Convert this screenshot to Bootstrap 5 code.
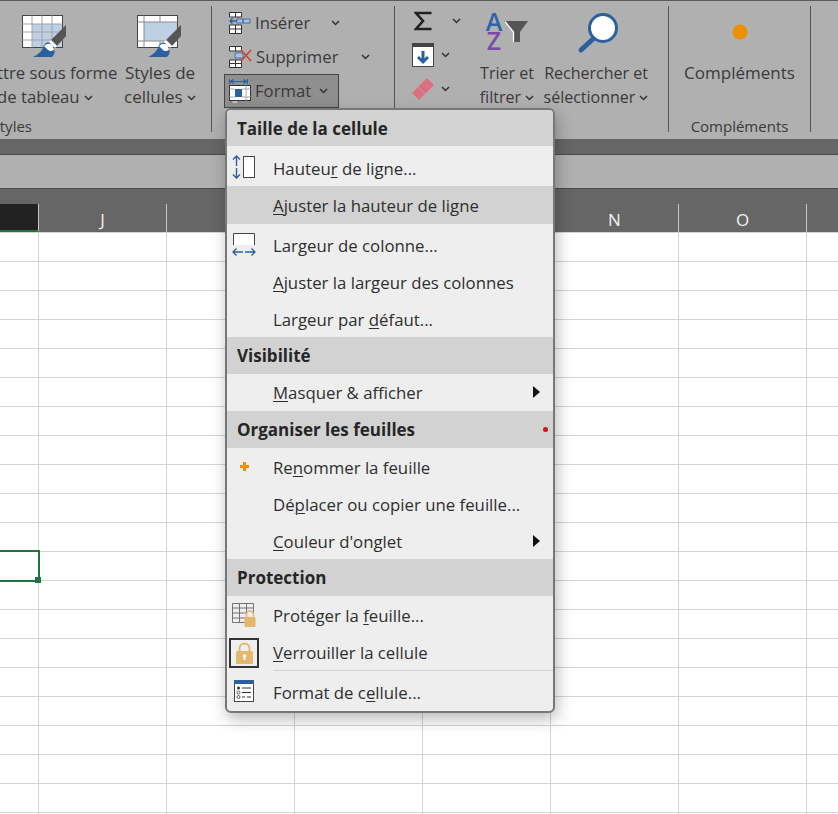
<!DOCTYPE html>
<html lang="fr">
<head>
<meta charset="UTF-8">
<title>Format</title>
<link href="https://cdn.jsdelivr.net/npm/bootstrap@5.3.3/dist/css/bootstrap.min.css" rel="stylesheet">
<style>
body { margin: 0; width: 838px; height: 814px; overflow: hidden; background: #fff; font-family: "Open Sans", "Liberation Sans", sans-serif; color: #333; }
svg { display: block; flex: none; }

/* ribbon */
.xl-page { width: 838px; overflow: hidden; }
.xl-ribbon { height: 139px; background: #b0b0b0; border-top: 1px solid #5a5a5a; margin-left: -34px; width: 872px; font-size: 17px; color: #3a3a3a; }
.xl-group { height: 126px; margin-top: 5px; border-right: 1px solid #555; flex: none; position: relative; }
.xl-g-styles { width: 246px; }
.xl-g-cells { width: 183px; padding-left: 17px; font-size: 16.7px; }
.xl-g-edit { width: 274px; font-size: 16px; }
.xl-g-addin { width: 142px; }
.xl-big { width: 100%; text-align: center; line-height: 24px; white-space: nowrap; }
.xl-big svg { margin: 0 auto; }
.xl-b-table { width: 158px; font-size: 16.7px; }
.xl-b-cellstyle { width: 72px; }
.xl-b-sort { width: 68px; margin-left: -2px; }
.xl-b-find { width: 116px; margin-left: -3px; }
.xl-icon-box { height: 55px; display: flex; align-items: center; justify-content: center; }
.xl-brush { margin-top: 6px !important; }
.xl-sort-icon { justify-content: flex-start; padding-left: 12px; gap: 1px; }
.xl-az { display: flex; flex-direction: column; font-size: 25px; font-weight: 600; line-height: 19px; margin-top: -5px; width: 18px; text-align: center; }
.xl-az-a { color: #2b64a8; }
.xl-az-z { color: #7a4ba5; }
.xl-funnel { margin: -4px 0 0 !important; }
.xl-lens { margin-left: 39px !important; margin-top: -1px !important; }
.xl-addin-dot { margin-top: -4px !important; }
.xl-label { position: absolute; bottom: -4px; left: 0; right: 0; text-align: center; font-size: 15px; line-height: 20px; }
.xl-label-styles { right: 179px; text-align: right; }
.xl-small { height: 34px; white-space: nowrap; }
.xl-active { background: #8f8f8f; border: 1px solid #444; width: 115px; margin-left: -5px; padding-left: 4px; }
.xl-chev { display: inline-block; vertical-align: 2px; margin-left: 4px; }
.xl-chev-near { margin-left: 1px; }
.xl-m-ins { margin-left: 17px; }
.xl-m-sup { margin-left: 19px; }
.xl-m-fmt { margin-left: 4px; }
.xl-tools { width: 80px; margin-top: -2px; padding-left: 17px; }
.xl-sigma { margin-left: 2px; }
.xl-m-sigma { margin-left: 20px; }
.xl-m-tool { margin-left: 7px; }
.xl-band { height: 16px; background: #666; border-bottom: 1px solid #4a4a4a; }
.xl-formula { height: 34px; background: #b0b0b0; border-bottom: 1px solid #4a4a4a; }

/* grid */
.xl-head { height: 43px; background: #666; padding-top: 15px; }
.xl-corner { width: 39px; flex: none; background: #222; border-right: 1px solid #c8c8c8; border-bottom: 2px solid #217346; }
.xl-col { width: 128px; flex: none; border-right: 1px solid #c8c8c8; color: #f2f2f2; text-align: center; font-size: 17px; line-height: 31px; }
.xl-sheet { height: 582px; position: relative; background-color: #fff;
  background-image: linear-gradient(#d4d4d4 1px, transparent 1px), linear-gradient(90deg, #d4d4d4 1px, transparent 1px);
  background-size: 128px 29px; background-position: 0 0, 38px 0; }
.xl-selected { position: absolute; left: -3px; top: 318px; width: 43px; height: 32px; border: 2px solid #217346; }
.xl-handle { position: absolute; left: 35px; top: 345px; width: 6px; height: 6px; background: #217346; }

/* menu */
.xl-menu { position: absolute; left: 225px; top: 108px; width: 330px; height: 605px; padding: 0; margin: 0; background: #eee; border: 2px solid #777; border-radius: 6px; box-shadow: 2px 6px 16px rgba(0,0,0,.28); font-size: 16.8px; overflow: hidden; }
.xl-menu .dropdown-header { height: 37px; background: #d2d2d2; color: #262626; font-weight: 700; font-size: 17px; padding: 0 0 0 10px; line-height: 38px; }
.xl-menu .dropdown-header.xl-first { height: 36px; }
.xl-menu .dropdown-item { color: #2e2e2e; padding: 0; height: 37px; position: relative; white-space: nowrap; }
.xl-menu .dropdown-item.active { background: #d2d2d2; color: #2e2e2e; }
.xl-slot { width: 34px; margin-right: 12px; flex: none; display: flex; justify-content: center; }
.xl-menu .dropdown-item.xl-h40 { height: 40px; padding-top: 4px; }
.xl-menu .dropdown-item.xl-h38 { height: 38px; padding-top: 1px; }
.xl-menu .dropdown-item.xl-h36 { height: 36px; padding-top: 1px; }
.xl-menu .dropdown-item.xl-low { padding-top: 6px; }
.xl-lift { margin-top: -2px; }
.xl-lift4 { margin-top: -4px; }
.xl-arrow { position: absolute; left: 306px; width: 0; height: 0; border-left: 7px solid #111; border-top: 6px solid transparent; border-bottom: 6px solid transparent; margin-top: -2px; }
.xl-dot { position: absolute; left: 316px; top: 16px; width: 5px; height: 5px; border-radius: 50%; background: #e01010; }
.xl-menu .dropdown-divider { margin: 0 0 0 46px; border-top: 1px solid #d0d0d0; opacity: 1; }
.xl-lockbox { width: 30px; height: 30px; border: 2px solid #333; display: flex; align-items: center; justify-content: center; flex: none; }
.xl-menu u { text-underline-offset: 2px; text-decoration-thickness: 1px; }
</style>
</head>
<body>

<svg width="0" height="0" class="position-absolute">
  <symbol id="chev" viewBox="0 0 9 6"><path d="M1 1l3.500 3.500L8 1" fill="none" stroke="#333" stroke-width="1.500"/></symbol>
  <symbol id="brush" viewBox="0 0 46 44">
    <path d="M44 10v11l-9 10-6-6z" fill="#555"/>
    <path d="M29 25l6 6-2 2-6-6z" fill="#fff"/>
    <path d="M11 42q9-4 11-12 3-4 6-2l4 6q2 4-2 8z" fill="#2b5f9e"/>
    <path d="M22 31q4-4 8-1l2 5q-4 2-6 0z" fill="#fff"/>
  </symbol>
</svg>

<div class="xl-page">
<div class="xl-ribbon d-flex">
  <!-- Styles -->
  <div class="xl-group xl-g-styles d-flex">
    <div class="xl-big xl-b-table">
      <div class="xl-icon-box">
        <svg class="xl-brush" width="46" height="44" viewBox="0 0 46 44">
          <rect x=".5" y=".5" width="40" height="32" fill="#fff" stroke="#444"/>
          <rect x="10" y="9" width="30" height="23" fill="#bdd0e6"/>
          <path d="M.5 9h40M.5 17h40M.5 25h40M10 .5v32M20 .5v32M30 .5v32" stroke="#a4a4a4" fill="none"/>
          <use href="#brush"/>
        </svg>
      </div>
      <div>Mettre sous forme</div>
      <div>de tableau <svg class="xl-chev d-inline-block" width="9" height="6"><use href="#chev"/></svg></div>
    </div>
    <div class="xl-big xl-b-cellstyle">
      <div class="xl-icon-box">
        <svg class="xl-brush" width="46" height="44" viewBox="0 0 46 44">
          <rect x=".5" y=".5" width="40" height="32" fill="#fff" stroke="#444"/>
          <rect x="7" y="7" width="33" height="19" fill="#bdd0e6"/>
          <path d="M.5 7h40M.5 26h40M7 .5v32M23 .5v6M23 26v6" stroke="#8a8a8a" fill="none"/>
          <use href="#brush"/>
        </svg>
      </div>
      <div>Styles de</div>
      <div>cellules <svg class="xl-chev d-inline-block" width="9" height="6"><use href="#chev"/></svg></div>
    </div>
    <div class="xl-label xl-label-styles">Styles</div>
  </div>

  <!-- Cellules -->
  <div class="xl-group xl-g-cells d-flex flex-column">
    <div class="xl-small d-flex align-items-center gap-1">
      <svg width="22" height="22" viewBox="0 0 22 22"><path d="M.5.500h12V5H.5zM6.500.5V5M.5 13h12v8.500H.5zM.5 17h12M6.500 13v8.500" fill="#fff" stroke="#333"/><path d="M8 7h6v4H8zM14 7h7v4h-7z" fill="#a9c2de" stroke="#2b5f9e" stroke-width=".8"/><path d="M8 9H1M3.500 6.500L1 9l2.500 2.500" fill="none" stroke="#2b5f9e" stroke-width="1.400"/></svg>
      <span>Insérer</span><svg class="xl-m-ins" width="9" height="6"><use href="#chev"/></svg>
    </div>
    <div class="xl-small d-flex align-items-center gap-1">
      <svg width="23" height="22" viewBox="0 0 23 22"><path d="M.5.500h12V5H.5zM6.500.5V5M.5 14h12v7.500H.5zM.5 17.500h12M6.500 14v7.500" fill="#fff" stroke="#333"/><path d="M6 7h8v5H6z" fill="#a9c2de" stroke="#2b5f9e" stroke-width=".8"/><path d="M12 4l10 11M22 4L12 15" stroke="#c84b2f" stroke-width="1.800"/></svg>
      <span>Supprimer</span><svg class="xl-m-sup" width="9" height="6"><use href="#chev"/></svg>
    </div>
    <div class="xl-small xl-active d-flex align-items-center gap-1">
      <svg width="22" height="24" viewBox="0 0 22 24"><path d="M.5 0v5M18.500 0v5M1 2.500h17M1 2.500l3-2v4zM18 2.500l-3-2v4z" stroke="#2b5f9e" fill="none"/><rect x=".5" y="6.500" width="21" height="15" fill="#fff" stroke="#333"/><rect x="6" y="10" width="7" height="8" fill="#2b5f9e"/><path d="M.5 10h5.500M13 10h8.500M.5 18h5.500M13 18h8.500M17 6.500v15" stroke="#aaa"/><path d="M3 22h6v2H3z" fill="#eee" stroke="#555" stroke-width=".6"/></svg>
      <span>Format</span><svg class="xl-m-fmt" width="9" height="6"><use href="#chev"/></svg>
    </div>
  </div>

  <!-- Edition -->
  <div class="xl-group xl-g-edit d-flex">
    <div class="xl-tools d-flex flex-column">
      <div class="xl-small d-flex align-items-center">
        <svg class="xl-sigma" width="18" height="20" viewBox="0 0 18 20"><path d="M17.500 2H2l7 8-7 8h15.500" fill="none" stroke="#222" stroke-width="2.600"/></svg>
        <svg class="xl-m-sigma" width="9" height="6"><use href="#chev"/></svg>
      </div>
      <div class="xl-small d-flex align-items-center">
        <svg width="22" height="24" viewBox="0 0 22 24"><rect x=".5" y=".5" width="21" height="23" fill="#fff" stroke="#444"/><rect width="22" height="4" fill="#444"/><path d="M11 8v11M6 14l5 5 5-5" fill="none" stroke="#2b5f9e" stroke-width="3"/></svg>
        <svg class="xl-m-tool" width="9" height="6"><use href="#chev"/></svg>
      </div>
      <div class="xl-small d-flex align-items-center">
        <svg width="22" height="22" viewBox="0 0 22 22"><path d="M1 14L14 1q1-1 2 0l5 5q1 1 0 2L8 21q-1 1-2 0l-5-5q-1-1 0-2z" fill="#dc6f80"/><path d="M6 9l7 7" stroke="#b0b0b0" stroke-width=".8"/></svg>
        <svg class="xl-m-tool" width="9" height="6"><use href="#chev"/></svg>
      </div>
    </div>
    <div class="xl-big xl-b-sort">
      <div class="xl-icon-box xl-sort-icon">
        <span class="xl-az"><span class="xl-az-a">A</span><span class="xl-az-z">Z</span></span>
        <svg class="xl-funnel" width="24" height="22" viewBox="0 0 24 22"><path d="M0 0h24l-8 11v10H9.500V11z" fill="#555"/><path d="M1 .5l8.500 10.500V21" fill="none" stroke="#fff" stroke-width="1.300"/></svg>
      </div>
      <div>Trier et</div>
      <div>filtrer <svg class="xl-chev xl-chev-near d-inline-block" width="9" height="6"><use href="#chev"/></svg></div>
    </div>
    <div class="xl-big xl-b-find">
      <div class="xl-icon-box justify-content-start">
        <svg class="xl-lens" width="42" height="42" viewBox="0 0 42 42"><circle cx="26" cy="16" r="13.500" fill="#fff" stroke="#2b5f9e" stroke-width="3"/><path d="M16 27L4 38" stroke="#2b5f9e" stroke-width="5" stroke-linecap="round"/></svg>
      </div>
      <div>Rechercher et</div>
      <div>sélectionner <svg class="xl-chev xl-chev-near d-inline-block" width="9" height="6"><use href="#chev"/></svg></div>
    </div>
  </div>

  <!-- Complements -->
  <div class="xl-group xl-g-addin">
    <div class="xl-big">
      <div class="xl-icon-box"><svg class="xl-addin-dot" width="16" height="16"><circle cx="8" cy="8" r="7.500" fill="#ee8f00"/></svg></div>
      <div>Compléments</div>
    </div>
    <div class="xl-label">Compléments</div>
  </div>
</div>

<div class="xl-band"></div>
<div class="xl-formula"></div>

<div class="xl-head d-flex">
  <div class="xl-corner"></div>
  <div class="xl-col">J</div>
  <div class="xl-col"></div>
  <div class="xl-col"></div>
  <div class="xl-col"></div>
  <div class="xl-col">N</div>
  <div class="xl-col">O</div>
</div>

<div class="xl-sheet">
  <div class="xl-selected"></div>
  <div class="xl-handle"></div>
</div>
</div>

<div class="dropdown-menu show xl-menu">
  <div class="dropdown-header xl-first">Taille de la cellule</div>
  <a class="dropdown-item d-flex align-items-center xl-h40 xl-low" href="#">
    <span class="xl-slot"><svg class="xl-lift4" width="24" height="24" viewBox="0 0 24 24"><path d="M4.500 1v10M4.500 13v10M1 4.500L4.500 1 8 4.500M1 19.500L4.500 23 8 19.500" fill="none" stroke="#2b5f9e" stroke-width="1.400"/><rect x="11.500" y="1.500" width="11" height="21" fill="#fff" stroke="#444"/></svg></span>
    <span>Hauteu<u>r</u> de ligne...</span>
  </a>
  <a class="dropdown-item active d-flex align-items-center xl-h38" href="#">
    <span class="xl-slot"></span><span><u>A</u>juster la hauteur de ligne</span>
  </a>
  <a class="dropdown-item d-flex align-items-center xl-h40" href="#">
    <span class="xl-slot"><svg class="xl-lift" width="24" height="24" viewBox="0 0 24 24"><path d="M1.500 12V.5h21V12" fill="#fff" stroke="#444"/><path d="M1 19h10M13 19h10M4.500 15.500L1 19l3.500 3.500M19.500 15.500L23 19l-3.500 3.500" fill="none" stroke="#2b5f9e" stroke-width="1.300"/></svg></span>
    <span>Lar<u>g</u>eur de colonne...</span>
  </a>
  <a class="dropdown-item d-flex align-items-center" href="#">
    <span class="xl-slot"></span><span><u>A</u>juster la largeur des colonnes</span>
  </a>
  <a class="dropdown-item d-flex align-items-center xl-h36" href="#">
    <span class="xl-slot"></span><span>Largeur par <u>d</u>éfaut...</span>
  </a>
  <div class="dropdown-header">Visibilité</div>
  <a class="dropdown-item d-flex align-items-center" href="#">
    <span class="xl-slot"></span><span><u>M</u>asquer &amp; afficher</span><span class="xl-arrow"></span>
  </a>
  <div class="dropdown-header position-relative">Organiser les feuilles<span class="xl-dot"></span></div>
  <a class="dropdown-item d-flex align-items-center xl-h38" href="#">
    <span class="xl-slot"><svg class="xl-lift" width="9" height="9" viewBox="0 0 9 9"><path d="M3 0h3v3h3v3H6v3H3V6H0V3h3z" fill="#ee8f00"/></svg></span>
    <span>Re<u>n</u>ommer la feuille</span>
  </a>
  <a class="dropdown-item d-flex align-items-center" href="#">
    <span class="xl-slot"></span><span>Dé<u>p</u>lacer ou copier une feuille...</span>
  </a>
  <a class="dropdown-item d-flex align-items-center xl-h36" href="#">
    <span class="xl-slot"></span><span><u>C</u>ouleur d'onglet</span><span class="xl-arrow"></span>
  </a>
  <div class="dropdown-header">Protection</div>
  <a class="dropdown-item d-flex align-items-center xl-h38" href="#">
    <span class="xl-slot"><svg class="xl-lift" width="24" height="24" viewBox="0 0 24 24"><path d="M.5.500h21v19H.5zM.5 5h21M.5 10h21M.5 15h21M7.500.5v19M14.500.5v19" fill="none" stroke="#666" stroke-width=".9"/><path d="M14.500 14v-2.500a3.500 3.500 0 0 1 7 0V14" fill="#eee" stroke="#e4b76f" stroke-width="1.500"/><rect x="12.500" y="14" width="11" height="10" rx="1" fill="#e4b76f"/></svg></span>
    <span>Protéger la <u>f</u>euille...</span>
  </a>
  <a class="dropdown-item d-flex align-items-center xl-h36" href="#">
    <span class="xl-slot"><span class="xl-lockbox"><svg width="17" height="22" viewBox="0 0 17 22"><path d="M3.500 10V6.500a5 5 0 0 1 10 0V10" fill="none" stroke="#e4b76f" stroke-width="2"/><rect y="9" width="17" height="13" rx="1.500" fill="#e4b76f"/><circle cx="8.500" cy="14" r="1.800" fill="#fff"/><path d="M8.500 14v4" stroke="#fff" stroke-width="1.800"/></svg></span></span>
    <span><u>V</u>errouiller la cellule</span>
  </a>
  <div class="dropdown-divider"></div>
  <a class="dropdown-item d-flex align-items-center xl-h40" href="#">
    <span class="xl-slot"><svg class="xl-lift4" width="20" height="22" viewBox="0 0 20 22"><rect x=".5" y=".5" width="19" height="21" fill="#fff" stroke="#444"/><rect width="20" height="4" fill="#2b5f9e"/><path d="M8 8h9M8 12.500h9M8 17h3M13 17h4" stroke="#333"/><circle cx="4.500" cy="8" r="1.500" fill="#333"/><circle cx="4.500" cy="12.500" r="1.500" fill="none" stroke="#333" stroke-width=".8"/><circle cx="4.500" cy="17" r="1.500" fill="none" stroke="#333" stroke-width=".8"/></svg></span>
    <span>Format de c<u>e</u>llule...</span>
  </a>
</div>

</body>
</html>
